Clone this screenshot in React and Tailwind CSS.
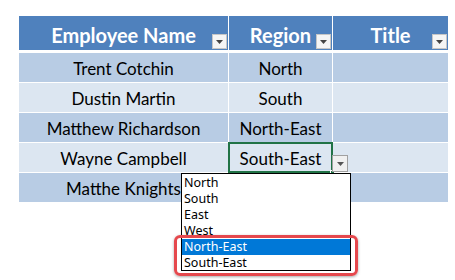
const rows = [
  { name: "Trent Cotchin", region: "North" },
  { name: "Dustin Martin", region: "South" },
  { name: "Matthew Richardson", region: "North-East" },
  { name: "Wayne Campbell", region: "South-East", active: true },
  { name: "Matthe Knights", region: "" },
];

const options = ["North", "South", "East", "West", "North-East", "South-East"];

const Arrow = ({ color = "#444" }) => (
  <svg width="7" height="4" viewBox="0 0 7 4">
    <path d="M0 0h7L3.5 4z" fill={color} />
  </svg>
);

const FilterButton = () => (
  <div className="absolute bottom-[1px] right-[1px] flex h-[15px] w-[15px] items-center justify-center border border-[#c6c6c6] bg-[#f5f5f5]">
    <Arrow />
  </div>
);

const ValidationList = () => (
  <div className="absolute left-[-48px] top-full z-20 mt-[1px] h-[98px] w-[170px] border border-black bg-white py-px text-left font-['Noto_Sans',sans-serif] text-[12.5px] leading-[16px] text-black">
    {options.map((o) => (
      <div key={o} className={`h-[16px] pl-[2px] ${o === "North-East" ? "bg-[#0078d7] text-white" : ""}`}>
        {o}
      </div>
    ))}
    {/* red callout around the last two options */}
    <div className="absolute left-[-8px] top-[61px] h-[41px] w-[184px] rounded-[6px] border-[3px] border-[#e5484d] shadow-[0_1px_3px_rgba(0,0,0,0.35)]" />
  </div>
);

const App = () => {
  return (
    <div className="h-[280px] w-[455px] overflow-hidden bg-white font-['Lato',sans-serif]">
      <div className="ml-[19px] w-[429px] pt-[16px]">
        <div className="grid h-[34px] grid-cols-[209px_103px_115px] gap-x-px text-[20px] font-bold text-white">
          {["Employee Name", "Region", "Title"].map((h) => (
            <div key={h} className="relative flex items-center justify-center bg-[#4f81bd] pt-[3px]">
              {h}
              <FilterButton />
            </div>
          ))}
        </div>

        <div className="mt-[3px] flex flex-col gap-px text-[17px] text-black">
          {rows.map((r, i) => {
            const bg = i % 2 === 0 ? "bg-[#b8cce4]" : "bg-[#dce6f1]";
            return (
              <div key={r.name} className={`grid h-[29px] grid-cols-[209px_103px_115px] gap-x-px ${r.active ? "relative z-10" : ""}`}>
                <div className={`flex items-center justify-center pt-[3px] ${bg}`}>{r.name}</div>
                <div
                  className={`relative flex items-center justify-center pt-[3px] ${bg} ${
                    r.active ? "outline-2 -outline-offset-1 outline-[#217346]" : ""
                  }`}
                >
                  {r.region}
                  {r.active && (
                    <>
                      <div className="absolute bottom-[-3px] right-[-3px] h-[5px] w-[5px] border border-white bg-[#217346]" />
                      <div className="absolute left-full top-[12px] flex h-[17px] w-[16px] items-center justify-center border border-[#a0a0a0] bg-[#f0f0f0]">
                        <Arrow color="#555" />
                      </div>
                      <ValidationList />
                    </>
                  )}
                </div>
                <div className={bg} />
              </div>
            );
          })}
        </div>
      </div>
    </div>
  );
};

export default App;
